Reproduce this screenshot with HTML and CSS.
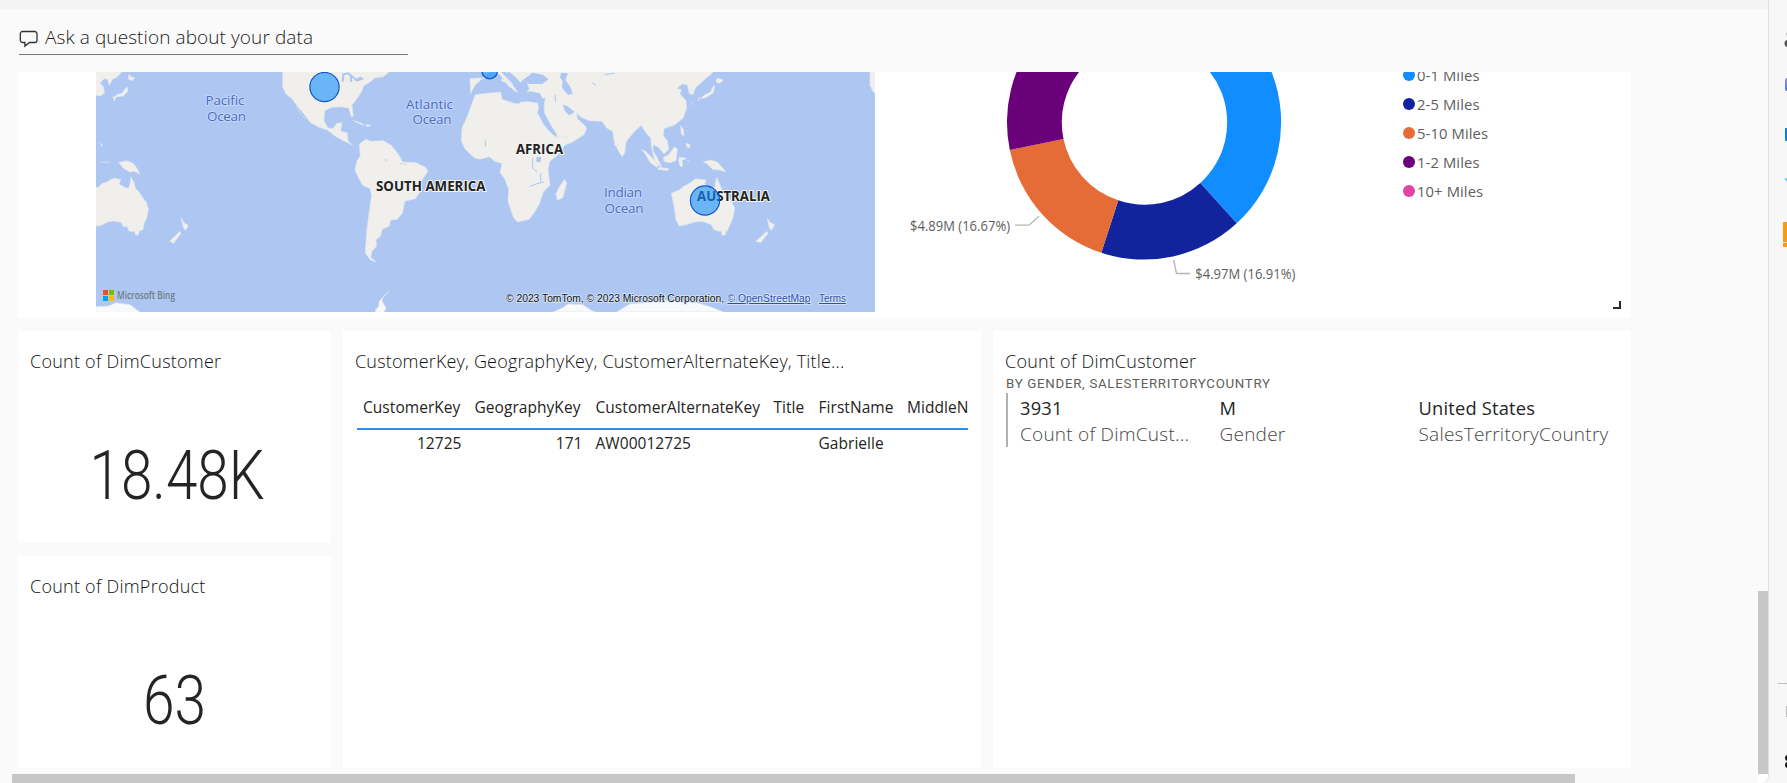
FILE: index.html
```html
<!DOCTYPE html>
<html lang="en">
<head>
<meta charset="utf-8">
<title>Dashboard</title>
<link rel="stylesheet" href="styles.css">
</head>
<body>
<div class="app">
  <main class="canvas">
    <div class="topstrip"></div>
    <div class="qna">
      <svg class="qna-icon" width="20" height="18" viewBox="0 0 20 18"><path d="M3.500 1.500h12.300a2.200 2.200 0 0 1 2.200 2.200v6.600a2.200 2.200 0 0 1-2.200 2.200H10.500l-4.600 3.600v-3.600H3.500a2.200 2.200 0 0 1-2.200-2.200V3.700a2.200 2.200 0 0 1 2.200-2.200z" fill="none" stroke="#333" stroke-width="1.300"/></svg>
      <span>Ask a question about your data</span>
    </div>
    <div class="tiles">
      <section class="tile report">
        <svg class="map" width="779" height="240" viewBox="96 72 779 240">
          <rect x="96" y="72" width="779" height="240" fill="#adc7f2"/>
          <g fill="#f0efeb" stroke="#e0e5ec" stroke-width="2" transform="scale(.33333)">
            <path d="M280 200H372L362 220L350 232L338 238L328 256L323 238L312 236L300 250L311 262L313 280L300 288L280 284z"/>
            <path d="M386 224l8 6 10 4-8 8-10-4zM384 262l-2 14-12 12-18 2-12 6 10-12 16-4 10-14zM339 290l8 2-4 12z"/>
            <path d="M356 488l22-6 22 8 10 14 10 18-18-8-12 2-18-10zM300 486l30 1M302 430l5 4-2 6z"/>
            <path d="M280 565l16-4 12-12 12-2 10-8 14-4 18 4-4 14 18 10 10 2 5-16 1-18 10 16 4 18 12 12 10 16 12 16 5 20-4 22-8 18-4 20-20 8-22-4-6-14-10 2-8-14-22-4-20 4-20 10-20 2z"/>
            <path d="M404 693h14l-4 13-8-2zM543 653l10 16 12 8-8 14-6-6zM540 694l3 6-22 30-12-6z"/>
            <path d="M848 200V260l10 22 18 14 14 20 22 26 20 26 26 14 24 8 20 16 24 14 32 16-14-14-2-24-20-4 4-26-16 2-10 16-16-2-12-22 2-30 22-10 28-2 22 4 8 26 6-2-4-32 18-24 12-20 4-14 20-12 14-12 26-4 20-16z"/>
            <path d="M1078 432l20-14 14 6 38-2 24 14 22 28 12 22 40 2 28 14 8 12-18 26-2 30-18 26-32 8-6 34-16 20-20 2-4 18-22 10-4 20-14 12 2 18-14 16-4 18 16 14-16-6-16-20 4-66 8-60 7-50-5-18-22-10-14-26-9-20 6-28 10-14z"/>
            <path d="M1060 362l26 8 6 6-20-8zM1096 374l16 2-8 4zM1168 872l-20 22-2 10 12 20-10 20h-18l-4-14 10-10 2-16 12-14zM288 945V920l38-2 22-10 42 6 24 18 20 13z" fill="#f8f9fa"/>
            <path d="M888 318l16 26 16 14M1150 478l14 4M1200 490l20 4" fill="none" stroke="#cdd9ee" stroke-width="3"/>
            <g stroke="#adc7f2" stroke-width="6" fill="none"><path d="M1026 224l18-4 14 10 10 10 16-8M1030 226l-2 20M1052 226l2 20M1070 242l20-6"/></g>
          </g>
          <g fill="#f0efeb" stroke="#e0e5ec" stroke-width="2" transform="translate(440 60) scale(.33333)">
            <path d="M92 100l-2-44 24-2 18 2 6-8-14-26h170L830 0 818 38l-14 12-16 14-20 18-12 22-8-4-6-26-14-2-12 8-6 6 14 2-4 14 18 20 2 22-10 30-28 22-20 6-10 4-2 22 12 14 4 26-14 14-16-20-16-8-2 16 12 20 16 32-20-16-10-36-4-36-16-18-12-20-18 16-16 18-12 16-4 34-8 10-12-20-12-28-4-28-18-10-14-20-40-2-22-10-14-12 2 16 18 16 10 12-8 20-38 24-30 10-10-20-18-36-22-42-2-22 4-24-42 2-18-14 12-16-8-20-14-6-4 8-14-16-24-20-10-6 14 22 12 18-8 18-10-10-20-28-22-14-18 8-20 20-16 14z"/>
            <path d="M106 104l34-4 42-4 4 22 36 12 16 2 6-10 48 6 4 16-4 14 18 34 16 20 22 20 34-4-8 28-20 28-24 20-6 24 6 48-20 20-12 36-14 24-16 22-36 8-12-14-16-48 2-36-12-32-14-18 6-28-22-6-16-14-28 8-16-4-28-26-12-24 2-40 14-30z"/>
            <path d="M374 358l6 12-12 44-16 6-4-18 10-22zM528 244l6 12-6 4-5-8z"/>
            <path d="M605 268l14 8 22 22 14 18-4 6-20-14-14-24zM656 322l30 4-4 6-28-4zM670 292l16-8 18-24 8 8-4 34-20 6-16-4zM718 292l20 2-2 4-10 2 2 20-8-2-4-16zM722 198l8 10 2 20-8-6zM738 250l12 4-2 10-8-4zM740 302l10 2"/>
            <path d="M790 306l20-6 22 6 14 16 12 14-20-6-20-2-16-16zM750 136l12-12M754 84l8 8-2 12-8-8zM824 78l-4 20-20 14-18 4 10-10 20-10 8-18zM832 54l18 6-10 10-12-4zM780 110l-6 14z"/>
            <path d="M694 400l24-10 14-12 20-10 14-12 16 2 16 2-4 12 16 14 14-4 6-30 12 28 8 20 22 20 12 24-4 26-8 20-10 22-22 2-18-4-8-16-10-4-18-6-22 2-26 8-20 4-10-18-6-42z"/>
            <path d="M844 512h15l-3 12-10 2zM982 475l8 12 14 8-10 16-6-8zM980 514l4 6-22 28-14-4z"/>
            <path d="M1290 36h20v68l-10-8-10-20z"/>
            <path d="M340 756l30-14 14-10 44 2 24 16 14 6zM530 756l40-24 50-4 40-10 50 6 60 4 40 12 40 16z" fill="#f8f9fa"/>
            <g fill="#adc7f2"><path d="M148 90l18-24 18 4 20 30 26 6-8-30-44-46 8-2 46 46 6 22 12 4 20-6 30 6 8 18-12 10-34-4-24 2-30-12-16-22zM248 60l30-22 30 6 18 14-20 14-40 0zM364 38l20 2-8 20 16 22 6 20-14 2-18-20 2-20-8-12zM368 134l14 4 22 18-16 10-14-14zM300 140l12 20 14 26 22 34 4 10-16-10-20-34-20-40zM290 290l14 2-4 16-12-4zM196 36l40 28 14 22-10-2-20-22-28-22z" stroke="none"/></g>
            <path d="M278 294v30l14 12M302 340v24M268 380l26-10 18-4M346 104v22M136 242v18M456 68l12 8M494 44l30-4" fill="none" stroke="#adc7f2" stroke-width="3"/>
            <path d="M186 56l30 16 18 26-14-8-18-20-18-8z"/>
          </g>
          <g class="ocean">
            <text x="205.500" y="105" textLength="39">Pacific</text><text x="207" y="120.500" textLength="39">Ocean</text>
            <text x="406" y="108.800" textLength="47">Atlantic</text><text x="412.500" y="123.500" textLength="39">Ocean</text>
            <text x="604" y="197" textLength="38">Indian</text><text x="604.500" y="212.500" textLength="39">Ocean</text>
          </g>
          <g class="land">
            <text x="516" y="153.700" textLength="47" lengthAdjust="spacingAndGlyphs">AFRICA</text>
            <text x="376" y="190.700" textLength="109.500" lengthAdjust="spacingAndGlyphs">SOUTH AMERICA</text>
            <text x="697" y="200.700" textLength="73" lengthAdjust="spacingAndGlyphs">AUSTRALIA</text>
          </g>
          <g fill="#118dff" fill-opacity=".6" stroke="#0f56c9" stroke-width="1.200">
            <circle cx="324.500" cy="87" r="14.600"/><circle cx="489.700" cy="71" r="7.800"/><circle cx="705" cy="200.500" r="14.600"/>
          </g>
          <path fill="#f25022" d="M103 290h5v5h-5z"/><path fill="#7fba00" d="M109 290h5v5h-5z"/><path fill="#00a4ef" d="M103 296h5v5h-5z"/><path fill="#ffb900" d="M109 296h5v5h-5z"/>
          <text class="bing" x="117" y="299" textLength="58" lengthAdjust="spacingAndGlyphs">Microsoft Bing</text>
          <g class="credit">
            <text x="506" y="302" textLength="218" lengthAdjust="spacingAndGlyphs">© 2023 TomTom, © 2023 Microsoft Corporation,</text>
            <text class="link" x="727.500" y="302" textLength="83" lengthAdjust="spacingAndGlyphs">© OpenStreetMap</text>
            <text class="link" x="819" y="302" textLength="27" lengthAdjust="spacingAndGlyphs">Terms</text>
          </g>
        </svg>
        <svg class="donut" width="528" height="246" viewBox="875 72 528 246">
          <path fill="#118dff" d="M1144-14.700A137 137 0 0 1 1236.700 223.300L1200.300 183A82 82 0 0 0 1144 40.300z"/>
          <path fill="#12239e" d="M1236.700 223.300A137 137 0 0 1 1101.300 252.800L1118.300 200.300A82 82 0 0 0 1200.300 183z"/>
          <path fill="#e66c37" d="M1101.300 252.800A137 137 0 0 1 1009.800 150L1063.500 139A82 82 0 0 0 1118.300 200.300z"/>
          <path fill="#6b007b" d="M1009.800 150A137 137 0 0 1 1144-14.700V40.300A82 82 0 0 0 1063.500 139z"/>
          <path d="M1015 225.200h14l10-9M1173.700 260l2.800 13.500H1190" fill="none" stroke="#b5b5b5" stroke-width="1.300"/>
          <text x="910" y="231" textLength="100" lengthAdjust="spacingAndGlyphs">$4.89M (16.67%)</text>
          <text x="1195.300" y="279" textLength="100" lengthAdjust="spacingAndGlyphs">$4.97M (16.91%)</text>
        </svg>
        <ul class="legend">
          <li><i class="dot c1"></i>0-1 Miles</li>
          <li><i class="dot c2"></i>2-5 Miles</li>
          <li><i class="dot c3"></i>5-10 Miles</li>
          <li><i class="dot c4"></i>1-2 Miles</li>
          <li><i class="dot c5"></i>10+ Miles</li>
        </ul>
        <span class="resize"></span>
      </section>
      <div class="cards">
        <section class="tile">
          <h2 class="t-short">Count of DimCustomer</h2>
          <svg class="kpi" width="313" height="150" viewBox="18 393 313 150"><text x="89.500" y="499" textLength="175" lengthAdjust="spacingAndGlyphs">18.48K</text></svg>
        </section>
        <section class="tile">
          <h2 class="t-short">Count of DimProduct</h2>
          <svg class="kpi" width="313" height="150" viewBox="18 618 313 150"><text x="143" y="724" textLength="63" lengthAdjust="spacingAndGlyphs">63</text></svg>
        </section>
      </div>
      <section class="tile">
        <h2 class="t-long">CustomerKey, GeographyKey, CustomerAlternateKey, Title...</h2>
        <div class="table">
          <div class="row head"><span>CustomerKey</span><span>GeographyKey</span><span>CustomerAlternateKey</span><span>Title</span><span>FirstName</span><span>MiddleName</span></div>
          <div class="row"><span class="num">12725</span><span class="num">171</span><span>AW00012725</span><span></span><span>Gabrielle</span><span></span></div>
        </div>
      </section>
      <section class="tile">
        <h2 class="t-short">Count of DimCustomer</h2>
        <p class="sub">BY GENDER, SALESTERRITORYCOUNTRY</p>
        <dl class="multi">
          <div><dt>3931</dt><dd>Count of DimCust...</dd></div>
          <div><dt>M</dt><dd>Gender</dd></div>
          <div><dt>United States</dt><dd>SalesTerritoryCountry</dd></div>
        </dl>
      </section>
    </div>
    <div class="hscroll"></div>
    <div class="vscroll"></div>
    <div class="corner"></div>
  </main>
  <aside class="rail">
    <svg width="18" height="783" viewBox="1769 0 18 783">
      <defs><linearGradient id="v" x2="0" y2="1"><stop stop-color="#9a8fe8"/><stop offset="1" stop-color="#3f7be0"/></linearGradient></defs>
      <circle cx="1788" cy="34" r="2" fill="#bbb"/><circle cx="1788" cy="43.500" r="3.500" fill="#555"/>
      <rect x="1785" y="78" width="8" height="13" rx="2" fill="url(#v)"/>
      <rect x="1785" y="128" width="8" height="13" rx="1" fill="#0f7fd8"/>
      <path d="M1784 178.500h5v5z" fill="#4fc3f0"/>
      <rect x="1783" y="222" width="8" height="25" fill="#fb9a12"/><path d="M1783 242.500h8" stroke="#ffd08a"/>
      <path d="M1778 683.500h10" stroke="#bdbdbd"/>
      <rect x="1786" y="706" width="4" height="11" fill="#bbb"/>
      <circle cx="1788" cy="758" r="3" fill="#111"/><circle cx="1788" cy="765" r="3" fill="#111"/>
    </svg>
  </aside>
</div>
</body>
</html>
```

FILE: styles.css
```css
* { box-sizing: border-box; }
body { margin: 0; background: #f7f7f7; font-family: "Open Sans", "Noto Sans", sans-serif; overflow: hidden; }
h2, p, dl, dd, ul { margin: 0; padding: 0; }
.app { display: flex; width: 1787px; height: 783px; }
.canvas { position: relative; width: 1769px; height: 783px; background: #fafafa; border-right: 1px solid #e1e1e1; border-bottom-right-radius: 8px; overflow: hidden; }
.topstrip { height: 9px; background: #f4f4f4; }
.qna { display: flex; align-items: center; width: 389px; height: 46px; margin: 0 0 17px 19px; padding: 10px 0 0; border-bottom: 1px solid #777; color: #1b1a19; font-size: 19px; font-weight: 300; letter-spacing: .09px; white-space: nowrap; }
.qna-icon { margin: 4px 6px 0 0; flex: none; }
.tiles { display: grid; grid-template-columns: 313px 638px 638px; grid-template-rows: 246px 437px; column-gap: 12px; row-gap: 13px; padding-left: 18px; }
.tile { position: relative; background: #fff; overflow: hidden; }
.report { grid-column: 1 / 4; display: flex; align-items: flex-start; padding-left: 78px; }
.map, .donut { display: block; flex: none; }
.ocean text { font-size: 13.500px; fill: #4a6cc8; paint-order: stroke; stroke: #c3d6f6; stroke-width: 2px; }
.land text { font-size: 13.500px; font-weight: 700; fill: #222; paint-order: stroke; stroke: #f4f4f2; stroke-width: 2px; }
.bing { font-size: 10px; font-weight: 600; fill: #737b88; }
.credit text { font-family: "Liberation Sans", sans-serif; font-size: 10px; fill: #111; paint-order: stroke; stroke: #dbe6fa; stroke-width: 1.500px; }
.credit .link { fill: #2d4fa8; text-decoration: underline; }
.donut text { font-size: 14px; fill: #605e5c; font-weight: 400; }
.legend { list-style: none; margin-top: -12px; }
.legend li { display: flex; align-items: center; height: 29.200px; color: #605e5c; font-size: 14.800px; letter-spacing: .1px; white-space: nowrap; }
.dot { width: 12px; height: 12px; border-radius: 50%; margin-right: 2px; }
.c1 { background: #118dff; } .c2 { background: #12239e; } .c3 { background: #e66c37; } .c4 { background: #6b007b; } .c5 { background: #e044a7; }
.resize { position: absolute; right: 10px; bottom: 9px; width: 8px; height: 8px; border-right: 2px solid #2b2b2b; border-bottom: 2px solid #2b2b2b; }
.cards { display: grid; grid-template-rows: 212px 212px; row-gap: 13px; }
h2 { padding: 18px 0 0 12px; height: 44px; font-size: 18px; line-height: 24px; font-weight: 300; color: #111; white-space: nowrap; }
.t-short { letter-spacing: .24px; }
.t-long { letter-spacing: .17px; }
.kpi { display: block; margin-top: 18px; }
.kpi text { font-family: Roboto, sans-serif; font-weight: 300; font-size: 68px; fill: #252423; }
.table { margin: 15px 13px 0 14px; overflow: hidden; font-size: 15.500px; color: #252423; letter-spacing: .05px; }
.row { display: grid; grid-template-columns: 111.500px 121px 178px 45px 88.500px 120px; height: 25px; align-items: center; white-space: nowrap; }
.row span { padding: 0 7px 0 6px; }
.row .num { text-align: right; }
.head { height: 40px; padding-bottom: 4px; border-bottom: 2px solid #2b90f2; }
.sub { padding-left: 13px; height: 18px; font: 400 13.300px/17px Roboto, sans-serif; color: #605e5c; letter-spacing: .7px; }
.multi { display: grid; grid-template-columns: 199.500px 199px 200px; width: 612px; height: 54px; margin-left: 13px; border-left: 2px solid #b3b0ad; padding-left: 12px; }
.multi div { padding-top: 1px; }
.multi dt, .multi dd { font-size: 18.300px; line-height: 27px; white-space: nowrap; color: #252423; letter-spacing: .2px; }
.multi dd { color: #484644; font-size: 19px; font-weight: 300; letter-spacing: .24px; }
.hscroll { position: absolute; left: 12px; top: 774px; width: 1563px; height: 9px; background: #c7c7c7; }
.vscroll { position: absolute; left: 1758px; top: 591px; width: 10px; height: 183px; background: #c7c7c7; }
.corner { position: absolute; left: 1758px; top: 774px; width: 10px; height: 9px; background: #fff; border-bottom-right-radius: 7px; }
.rail { width: 18px; background: #f7f7f7; }
.rail svg { display: block; }
```
